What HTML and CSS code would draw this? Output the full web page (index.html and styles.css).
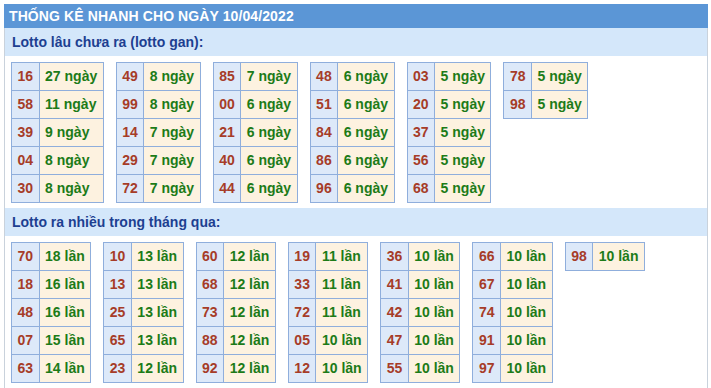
FILE: index.html
```html
<!DOCTYPE html>
<html lang="vi">
<head>
<meta charset="utf-8">
<title>Thống kê nhanh</title>
<link rel="stylesheet" href="styles.css">
</head>
<body>
<div class="box">
  <div class="title">THỐNG KÊ NHANH CHO NGÀY 10/04/2022</div>
  <div class="sub">Lotto lâu chưa ra (lotto gan):</div>
  <div class="grid">
    <table><tbody>
      <tr><td class="n">16</td><td class="v">27 ngày</td></tr>
      <tr><td class="n">58</td><td class="v">11 ngày</td></tr>
      <tr><td class="n">39</td><td class="v">9 ngày</td></tr>
      <tr><td class="n">04</td><td class="v">8 ngày</td></tr>
      <tr><td class="n">30</td><td class="v">8 ngày</td></tr>
    </tbody></table>
    <table><tbody>
      <tr><td class="n">49</td><td class="v">8 ngày</td></tr>
      <tr><td class="n">99</td><td class="v">8 ngày</td></tr>
      <tr><td class="n">14</td><td class="v">7 ngày</td></tr>
      <tr><td class="n">29</td><td class="v">7 ngày</td></tr>
      <tr><td class="n">72</td><td class="v">7 ngày</td></tr>
    </tbody></table>
    <table><tbody>
      <tr><td class="n">85</td><td class="v">7 ngày</td></tr>
      <tr><td class="n">00</td><td class="v">6 ngày</td></tr>
      <tr><td class="n">21</td><td class="v">6 ngày</td></tr>
      <tr><td class="n">40</td><td class="v">6 ngày</td></tr>
      <tr><td class="n">44</td><td class="v">6 ngày</td></tr>
    </tbody></table>
    <table><tbody>
      <tr><td class="n">48</td><td class="v">6 ngày</td></tr>
      <tr><td class="n">51</td><td class="v">6 ngày</td></tr>
      <tr><td class="n">84</td><td class="v">6 ngày</td></tr>
      <tr><td class="n">86</td><td class="v">6 ngày</td></tr>
      <tr><td class="n">96</td><td class="v">6 ngày</td></tr>
    </tbody></table>
    <table><tbody>
      <tr><td class="n">03</td><td class="v">5 ngày</td></tr>
      <tr><td class="n">20</td><td class="v">5 ngày</td></tr>
      <tr><td class="n">37</td><td class="v">5 ngày</td></tr>
      <tr><td class="n">56</td><td class="v">5 ngày</td></tr>
      <tr><td class="n">68</td><td class="v">5 ngày</td></tr>
    </tbody></table>
    <table><tbody>
      <tr><td class="n">78</td><td class="v">5 ngày</td></tr>
      <tr><td class="n">98</td><td class="v">5 ngày</td></tr>
    </tbody></table>
  </div>
  <div class="sub">Lotto ra nhiều trong tháng qua:</div>
  <div class="grid">
    <table><tbody>
      <tr><td class="n">70</td><td class="v">18 lần</td></tr>
      <tr><td class="n">18</td><td class="v">16 lần</td></tr>
      <tr><td class="n">48</td><td class="v">16 lần</td></tr>
      <tr><td class="n">07</td><td class="v">15 lần</td></tr>
      <tr><td class="n">63</td><td class="v">14 lần</td></tr>
    </tbody></table>
    <table><tbody>
      <tr><td class="n">10</td><td class="v">13 lần</td></tr>
      <tr><td class="n">13</td><td class="v">13 lần</td></tr>
      <tr><td class="n">25</td><td class="v">13 lần</td></tr>
      <tr><td class="n">65</td><td class="v">13 lần</td></tr>
      <tr><td class="n">23</td><td class="v">12 lần</td></tr>
    </tbody></table>
    <table><tbody>
      <tr><td class="n">60</td><td class="v">12 lần</td></tr>
      <tr><td class="n">68</td><td class="v">12 lần</td></tr>
      <tr><td class="n">73</td><td class="v">12 lần</td></tr>
      <tr><td class="n">88</td><td class="v">12 lần</td></tr>
      <tr><td class="n">92</td><td class="v">12 lần</td></tr>
    </tbody></table>
    <table><tbody>
      <tr><td class="n">19</td><td class="v">11 lần</td></tr>
      <tr><td class="n">33</td><td class="v">11 lần</td></tr>
      <tr><td class="n">72</td><td class="v">11 lần</td></tr>
      <tr><td class="n">05</td><td class="v">10 lần</td></tr>
      <tr><td class="n">12</td><td class="v">10 lần</td></tr>
    </tbody></table>
    <table><tbody>
      <tr><td class="n">36</td><td class="v">10 lần</td></tr>
      <tr><td class="n">41</td><td class="v">10 lần</td></tr>
      <tr><td class="n">42</td><td class="v">10 lần</td></tr>
      <tr><td class="n">47</td><td class="v">10 lần</td></tr>
      <tr><td class="n">55</td><td class="v">10 lần</td></tr>
    </tbody></table>
    <table><tbody>
      <tr><td class="n">66</td><td class="v">10 lần</td></tr>
      <tr><td class="n">67</td><td class="v">10 lần</td></tr>
      <tr><td class="n">74</td><td class="v">10 lần</td></tr>
      <tr><td class="n">91</td><td class="v">10 lần</td></tr>
      <tr><td class="n">97</td><td class="v">10 lần</td></tr>
    </tbody></table>
    <table><tbody>
      <tr><td class="n">98</td><td class="v">10 lần</td></tr>
    </tbody></table>
  </div>
</div>
</body>
</html>
```
FILE: styles.css
```css
html, body {
  background: #ffffff;
}
body {
  margin: 4px 3px 0 4px;
  font-family: "Liberation Sans", Arial, sans-serif;
}
.box {
  border-left: 1px solid #c9d2dc;
  border-right: 1px solid #c9d2dc;
  padding-bottom: 6px;
}
.title {
  background: #5b96d6;
  color: #ffffff;
  font-weight: bold;
  font-size: 14px;
  letter-spacing: 0.1px;
  height: 24px;
  line-height: 25px;
  padding-left: 5px;
  margin-left: -1px;
  margin-right: -1px;
}
.sub {
  background: #d4e7fa;
  color: #1d3f91;
  font-weight: bold;
  font-size: 14px;
  height: 28px;
  line-height: 29px;
  padding-left: 7px;
}
.grid {
  display: flex;
  flex-wrap: wrap;
  align-items: flex-start;
  gap: 12px;
  padding: 6px 0 5px 6px;
}
table {
  border-collapse: separate;
  border-spacing: 0;
  border-top: 1px solid #8faedc;
  border-left: 1px solid #8faedc;
}
td {
  border-right: 1px solid #8faedc;
  border-bottom: 1px solid #8faedc;
  height: 27px;
  padding: 0 5.5px;
  font-size: 14px;
  font-weight: bold;
  line-height: 27px;
  white-space: nowrap;
}
td.n {
  background: #dde9f9;
  color: #a63c28;
  text-align: center;
}
td.v {
  background: #fdf2e0;
  color: #1c7b18;
}
```
